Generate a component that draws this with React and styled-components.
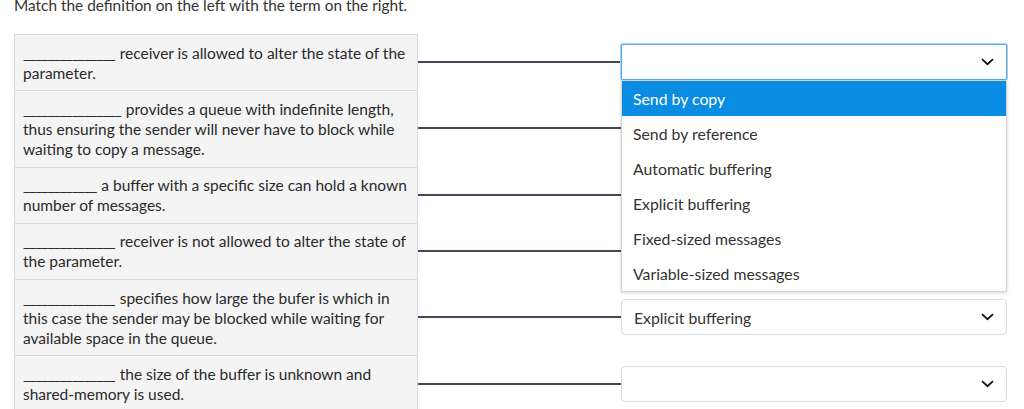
import styled, { createGlobalStyle } from "styled-components"

const GlobalStyle = createGlobalStyle`
    body {
        margin: 0;
        background: #ffffff;
        font-family: Lato, "Noto Sans", sans-serif;
        color: #2d2d2d;
        overflow: hidden;
    }
`

const Page = styled.div`
    padding: 0 14px;
`

const Title = styled.p`
    margin: -5px 0 19px;
    font-size: 15.4px;
    line-height: 20px;
    color: #333333;
`

const Board = styled.div`
    display: grid;
    grid-template-columns: 404px 203px 386px;
`

const Definition = styled.div`
    padding: 7.65px 5px 7.65px 8px;
    font-size: 15.5px;
    line-height: 20px;
    background: #f4f4f4;
    border: 1px solid #d6dbe0;
    border-bottom: none;
    color: #2a2a2a;
`

const Blank = styled.span`
    letter-spacing: -1px;
    margin-right: 1px;
`

const Connector = styled.div`
    display: flex;
    align-items: center;
`

const Line = styled.div`
    flex: 1;
    height: 2px;
    background: #3f4852;
`

const Slot = styled.div`
    position: relative;
    display: flex;
    align-items: center;
`

const Select = styled.div`
    flex: 1;
    height: 36px;
    box-sizing: border-box;
    display: flex;
    align-items: center;
    justify-content: space-between;
    padding: 0 12px;
    font-size: 15.8px;
    color: #333333;
    background: #ffffff;
    border: 1px solid ${(p) => (p.$focused ? "#5aa8ea" : "#d9dde1")};
    border-radius: ${(p) => (p.$focused ? "2px" : "4px")};
    box-shadow: ${(p) => (p.$focused ? "0 0 0 1px #a9d2f4" : "none")};
`

const Menu = styled.ul`
    position: absolute;
    top: calc(50% + 18px);
    left: 0;
    right: 0;
    margin: 0;
    padding: 0;
    list-style: none;
    background: #ffffff;
    border: 1px solid #d3d6d9;
    box-shadow: 0 1px 3px rgba(0, 0, 0, 0.18);
    z-index: 5;
`

const Option = styled.li`
    height: 35px;
    display: flex;
    align-items: center;
    padding: 0 11px;
    font-size: 15.8px;
    color: ${(p) => (p.$active ? "#ffffff" : "#333333")};
    background: ${(p) => (p.$active ? "#0a8ce2" : "transparent")};
`

const Chevron = () => (
    <svg width="13" height="8" viewBox="0 0 13 8">
        <path d="M1 1.2 L6.5 6.2 L12 1.2" fill="none" stroke="#111" strokeWidth="1.8" />
    </svg>
)

const terms = [
    "Send by copy",
    "Send by reference",
    "Automatic buffering",
    "Explicit buffering",
    "Fixed-sized messages",
    "Variable-sized messages",
]

const rows = [
    { blank: 15, text: "receiver is allowed to alter the state of the parameter.", open: true },
    { blank: 16, text: "provides a queue with indefinite length, thus ensuring the sender will never have to block while waiting to copy a message." },
    { blank: 12, text: "a buffer with a specific size can hold a known number of messages." },
    { blank: 15, text: "receiver is not allowed to alter the state of the parameter." },
    { blank: 15, text: "specifies how large the bufer is which in this case the sender may be blocked while waiting for available space in the queue.", value: "Explicit buffering" },
    { blank: 15, text: "the size of the buffer is unknown and shared-memory is used." },
]

export default function App() {
    return (
        <Page>
            <GlobalStyle />
            <Title>Match the definition on the left with the term on the right.</Title>
            <Board>
                {rows.map((row, i) => (
                    <>
                        <Definition key={"d" + i}>
                            <Blank>{"_".repeat(row.blank)}</Blank> {row.text}
                        </Definition>
                        <Connector key={"c" + i}><Line /></Connector>
                        <Slot key={"s" + i}>
                            <Select $focused={row.open}>
                                <span>{row.value || ""}</span>
                                <Chevron />
                            </Select>
                            {row.open && (
                                <Menu>
                                    {terms.map((t, j) => (
                                        <Option key={t} $active={j === 0}>{t}</Option>
                                    ))}
                                </Menu>
                            )}
                        </Slot>
                    </>
                ))}
            </Board>
        </Page>
    )
}
